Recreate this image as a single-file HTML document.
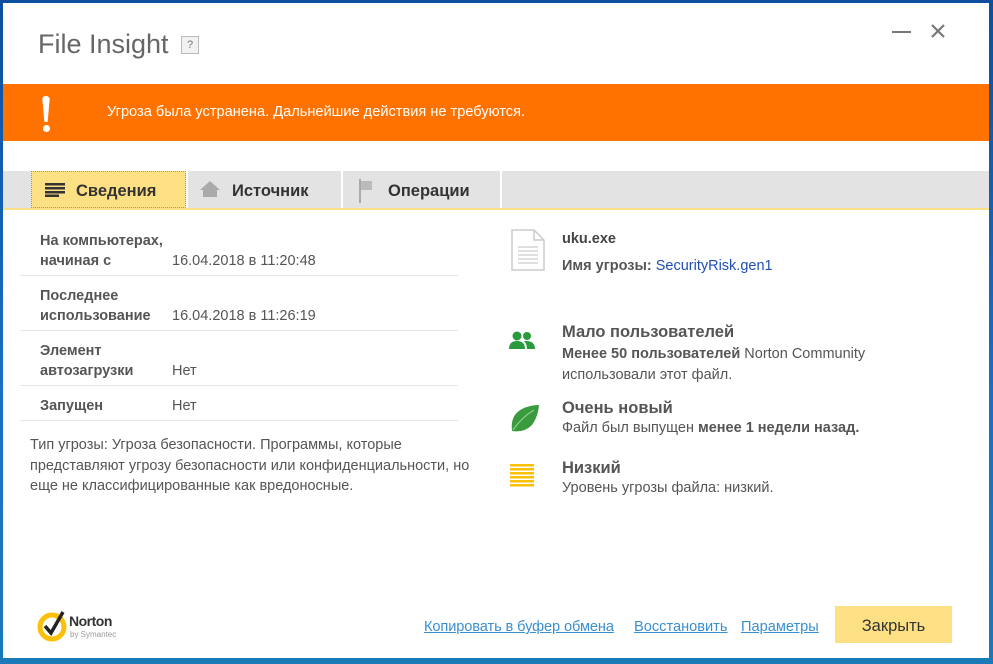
<!DOCTYPE html>
<html><head><meta charset="utf-8"><style>
*{margin:0;padding:0;box-sizing:border-box}
body{width:993px;height:664px;overflow:hidden;background:linear-gradient(180deg,#0d4f9e,#1b6fc4 60%,#1a7ab8);font-family:"Liberation Sans","DejaVu Sans",sans-serif;color:#555;position:relative}
.win{position:absolute;left:3px;top:3px;width:986px;height:655px;background:#fff}
.abs{position:absolute;white-space:nowrap}
.b{font-weight:bold}
.t{font-size:14.5px}
.row{position:absolute;left:17px;width:438px;border-bottom:1px solid #e6e6e6}
a{color:#3a8fd0;text-decoration:underline}
</style></head><body>
<div class="win">
<div class="abs" style="left:35px;top:26px;font-size:27px;color:#666;">File Insight</div>
<div class="abs" style="left:178px;top:33px;width:18px;height:18px;border:1px solid #bbb;background:#f1f1f1;font-size:11px;color:#777;text-align:center;line-height:16px">?</div>
<div class="abs" style="left:889px;top:28px;width:19px;height:2px;background:#777"></div>
<svg class="abs" style="left:927px;top:20px" width="16" height="16"><path d="M2 2L14 14M14 2L2 14" stroke="#777" stroke-width="2.2"/></svg>
<div class="abs" style="left:0;top:81px;width:986px;height:57px;background:#ff7200"></div>
<div class="abs" style="left:39px;top:93px;width:8px;height:26px;background:#fff;border-radius:4px 4px 2px 2px;clip-path:polygon(0 0,100% 0,70% 100%,30% 100%)"></div>
<div class="abs" style="left:40px;top:122px;width:7px;height:7px;background:#fff;border-radius:50%"></div>
<div class="abs" style="left:104px;top:101px;font-size:14.6px;color:#fff">Угроза была устранена. Дальнейшие действия не требуются.</div>
<div class="abs" style="left:0;top:168px;width:986px;height:37px;background:#e3e3e3"></div>
<div class="abs" style="left:0;top:205px;width:986px;height:2px;background:#fde084"></div>
<div class="abs" style="left:28px;top:168px;width:155px;height:37px;background:#fde084;border:1px dotted #998"></div>
<div class="abs" style="left:183px;top:168px;width:2px;height:37px;background:#fff"></div>
<div class="abs" style="left:338px;top:168px;width:2px;height:37px;background:#fff"></div>
<div class="abs" style="left:497px;top:168px;width:2px;height:37px;background:#fff"></div>
<svg class="abs" style="left:42px;top:180px" width="20" height="14"><g fill="#333"><rect y="0" width="20" height="2.5"/><rect y="4" width="20" height="2.5"/><rect y="8" width="20" height="2.5"/><rect y="11.5" width="14" height="2.5"/></g></svg>
<div class="abs b" style="left:73px;top:179px;font-size:16.5px;color:#333">Сведения</div>
<svg class="abs" style="left:197px;top:178px" width="20" height="16"><path d="M10 0L20 9H17V16H3V9H0Z" fill="#aaa"/></svg>
<div class="abs b" style="left:229px;top:179px;font-size:16.5px;color:#333">Источник</div>
<svg class="abs" style="left:356px;top:176px" width="14" height="24"><rect x="0" y="0" width="2" height="24" fill="#aaa"/><path d="M2 2H13V11H2Z" fill="#bbb"/></svg>
<div class="abs b" style="left:385px;top:179px;font-size:16.5px;color:#333">Операции</div>

<div class="row" style="top:218px;height:55px"></div>
<div class="abs b t" style="left:37px;top:228px;line-height:20px">На компьютерах,<br>начиная с</div>
<div class="abs t" style="left:169px;top:248px;line-height:20px">16.04.2018 в 11:20:48</div>
<div class="row" style="top:273px;height:55px"></div>
<div class="abs b t" style="left:37px;top:283px;line-height:20px">Последнее<br>использование</div>
<div class="abs t" style="left:169px;top:303px;line-height:20px">16.04.2018 в 11:26:19</div>
<div class="row" style="top:328px;height:55px"></div>
<div class="abs b t" style="left:37px;top:338px;line-height:20px">Элемент<br>автозагрузки</div>
<div class="abs t" style="left:169px;top:358px;line-height:20px">Нет</div>
<div class="row" style="top:383px;height:35px"></div>
<div class="abs b t" style="left:37px;top:393px;line-height:20px">Запущен</div>
<div class="abs t" style="left:169px;top:393px;line-height:20px">Нет</div>
<div class="abs t" style="left:27px;top:432px;line-height:20.5px">Тип угрозы: Угроза безопасности. Программы, которые<br>представляют угрозу безопасности или конфиденциальности, но<br>еще не классифицированные как вредоносные.</div>

<svg class="abs" style="left:508px;top:226px" width="34" height="42"><path d="M1 1H23L33 11V41H1Z" fill="#fff" stroke="#ccc" stroke-width="1.5"/><path d="M23 1V11H33" fill="none" stroke="#ccc" stroke-width="1.5"/><g stroke="#ccc" stroke-width="1.3"><path d="M7 18H27M7 22H27M7 26H27M7 30H27M7 34H27"/></g></svg>
<div class="abs b t" style="left:559px;top:228px;color:#444">uku.exe</div>
<div class="abs t" style="left:559px;top:255px"><span class="b">Имя угрозы:</span> <span style="color:#1f4fb5">SecurityRisk.gen1</span></div>

<svg class="abs" style="left:506px;top:328px" width="26" height="18"><g fill="#2a9b3c"><circle cx="8" cy="5" r="4.5"/><path d="M0 18Q0 10 8 10Q16 10 16 18Z"/><circle cx="18" cy="5" r="4"/><path d="M17 10Q26 10 26 18H18Q18 13 15 10Z"/></g></svg>
<div class="abs b" style="left:559px;top:320px;font-size:16.5px;color:#555">Мало пользователей</div>
<div class="abs t" style="left:559px;top:341px;line-height:20.5px"><span class="b">Менее 50 пользователей</span> Norton Community<br>использовали этот файл.</div>

<svg class="abs" style="left:507px;top:400px" width="30" height="30"><path d="M2 28Q0 12 12 6Q20 2 29 2Q28 14 22 22Q14 30 2 28Z" fill="#3a9b3e"/><path d="M3 27Q12 14 24 7" stroke="#8cd08c" stroke-width="1.2" fill="none"/></svg>
<div class="abs b" style="left:559px;top:396px;font-size:16.5px;color:#555">Очень новый</div>
<div class="abs t" style="left:559px;top:417px">Файл был выпущен <span class="b">менее 1 недели назад.</span></div>

<svg class="abs" style="left:507px;top:461px" width="24" height="24"><g fill="#fdc00a"><rect y="0" width="24" height="2.5"/><rect y="4" width="24" height="2.5"/><rect y="8" width="24" height="2.5"/><rect y="12" width="24" height="2.5"/><rect y="16" width="24" height="2.5"/><rect y="20" width="24" height="2.5"/></g></svg>
<div class="abs b" style="left:559px;top:456px;font-size:16.5px;color:#555">Низкий</div>
<div class="abs t" style="left:559px;top:477px">Уровень угрозы файла: низкий.</div>

<svg class="abs" style="left:34px;top:605px" width="34" height="34"><circle cx="15" cy="19" r="12" fill="none" stroke="#fdc00a" stroke-width="5"/><path d="M8 18L14 25L26 4" stroke="#222" stroke-width="3.5" fill="none"/></svg>
<div class="abs b" style="left:66px;top:610px;font-size:14px;color:#333;letter-spacing:-0.5px">Norton</div>
<div class="abs" style="left:67px;top:627px;font-size:8px;color:#999">by Symantec</div>

<a class="abs" style="left:421px;top:616px;font-size:14.6px;letter-spacing:-0.1px">Копировать в буфер обмена</a>
<a class="abs" style="left:631px;top:616px;font-size:14.6px">Восстановить</a>
<a class="abs" style="left:738px;top:616px;font-size:14.6px">Параметры</a>
<div class="abs" style="left:832px;top:603px;width:117px;height:37px;background:#fde084;font-size:16.5px;color:#333;text-align:center;line-height:40px">Закрыть</div>
</div>
</body></html>
